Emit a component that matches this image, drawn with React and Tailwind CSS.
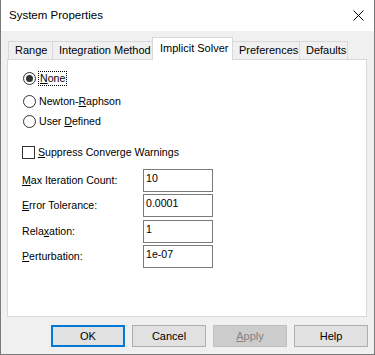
import React from "react";

function Radio({ checked, children, focus }) {
  return (
    <div className="flex items-center h-[15px]">
      <div className="w-[13px] h-[13px] rounded-full border border-[#333333] bg-white flex items-center justify-center shrink-0">
        {checked && <div className="w-[7px] h-[7px] rounded-full bg-[#333333]" />}
      </div>
      {focus ? (
        <span className="ml-[2px] px-[1px] h-[15px] flex items-center border border-dotted border-[#000000] leading-[13px]">
          {children}
        </span>
      ) : (
        <span className="ml-[3px] leading-[13px]">{children}</span>
      )}
    </div>
  );
}

function Field({ label, value, mt }) {
  return (
    <div className={`flex items-center ${mt}`}>
      <div className="w-[121px] leading-[13px]">{label}</div>
      <div className="w-[70px] h-[23px] border border-[#7a7a7a] bg-white pl-[2px] pt-[2px] leading-[13px]">
        {value}
      </div>
    </div>
  );
}

function Btn({ children, variant }) {
  const base =
    "w-[74px] h-[22px] flex items-center justify-center leading-none";
  if (variant === "default")
    return (
      <div className={`${base} border-2 border-[#0078d7] bg-[#e1e1e1] text-black`}>
        {children}
      </div>
    );
  if (variant === "disabled")
    return (
      <div className={`${base} border border-[#bfbfbf] bg-[#cccccc] text-[#838383]`}>
        {children}
      </div>
    );
  return (
    <div className={`${base} border border-[#adadad] bg-[#e1e1e1] text-black`}>
      {children}
    </div>
  );
}

export default function App() {
  return (
    <div className="w-[375px] h-[355px] bg-[#f0f0f0] border-x border-b border-[#7a7a7a] flex flex-col font-['Liberation_Sans',Arial,sans-serif] text-black overflow-hidden">
      {/* Title bar */}
      <div className="h-[31px] bg-white flex items-center justify-between pl-[8px] pr-[10px] shrink-0">
        <span className="text-[11.5px] leading-none">System Properties</span>
        <svg width="11" height="11" viewBox="0 0 11 11" className="block">
          <path d="M0.5 0.5 L10.5 10.5 M10.5 0.5 L0.5 10.5" stroke="#000" strokeWidth="1" fill="none" />
        </svg>
      </div>

      {/* Tabs */}
      <div className="pt-[6px] pl-[7px] flex items-end h-[28px] text-[11px] shrink-0">
        <div className="w-[44px] h-[18px] border-l border-t border-[#d9d9d9] flex items-center pl-[6px] leading-none">
          Range
        </div>
        <div className="w-[100px] h-[18px] border-l border-t border-[#d9d9d9] flex items-center pl-[6px] leading-none">
          Integration Method
        </div>
        <div className="relative z-10 -mb-px w-[81px] h-[23px] border-x border-t border-[#d9d9d9] bg-white flex items-start pt-[5px] pl-[7px] leading-none">
          Implicit Solver
        </div>
        <div className="w-[67px] h-[18px] border-r border-t border-[#d9d9d9] flex items-center pl-[6px] leading-none">
          Preferences
        </div>
        <div className="w-[48px] h-[18px] border-r border-t border-[#d9d9d9] flex items-center pl-[6px] leading-none">
          Defaults
        </div>
      </div>

      {/* Panel */}
      <div className="ml-[6px] w-[360px] h-[258px] border border-[#d9d9d9] bg-white flex flex-col pt-[11px] pl-[15px] text-[10.6px] shrink-0">
        <Radio checked focus>
          <span className="underline">N</span>one
        </Radio>
        <div className="mt-[8px]">
          <Radio>
            Newton-<span className="underline">R</span>aphson
          </Radio>
        </div>
        <div className="mt-[5px]">
          <Radio>
            User <span className="underline">D</span>efined
          </Radio>
        </div>

        <div className="flex items-center h-[15px] mt-[16px] -ml-[1px]">
          <div className="w-[13px] h-[13px] border border-[#333333] bg-white shrink-0" />
          <span className="ml-[3px] leading-[13px]">
            <span className="underline">S</span>uppress Converge Warnings
          </span>
        </div>

        <div className="-ml-[1px] flex flex-col">
          <Field
            mt="mt-[9px]"
            label={
              <>
                <span className="underline">M</span>ax Iteration Count:
              </>
            }
            value="10"
          />
          <Field
            mt="mt-[2px]"
            label={
              <>
                <span className="underline">E</span>rror Tolerance:
              </>
            }
            value="0.0001"
          />
          <Field
            mt="mt-[3px]"
            label={
              <>
                Rela<span className="underline">x</span>ation:
              </>
            }
            value="1"
          />
          <Field
            mt="mt-[2px]"
            label={
              <>
                <span className="underline">P</span>erturbation:
              </>
            }
            value="1e-07"
          />
        </div>
      </div>

      {/* Buttons */}
      <div className="mt-[8px] flex justify-end gap-[7px] pr-[6px] text-[11px]">
        <Btn variant="default">OK</Btn>
        <Btn>Cancel</Btn>
        <Btn variant="disabled">
          <span>
            <span className="underline">A</span>pply
          </span>
        </Btn>
        <Btn>Help</Btn>
      </div>
    </div>
  );
}
